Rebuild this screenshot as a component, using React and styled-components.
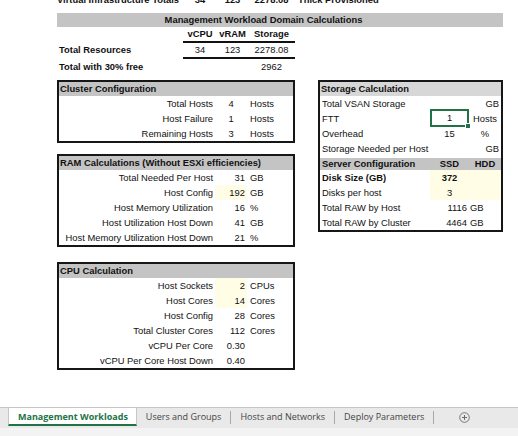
import styled, { createGlobalStyle } from "styled-components";

const GlobalStyle = createGlobalStyle`
  html, body {
    margin: 0;
    padding: 0;
    background: #fff;
  }
  body {
    font-family: "Liberation Sans", Arial, sans-serif;
    font-size: 9.4px;
    color: #111;
  }
`;

const clusterRows = [
  { label: "Total Hosts", value: "4", unit: "Hosts" },
  { label: "Host Failure", value: "1", unit: "Hosts" },
  { label: "Remaining Hosts", value: "3", unit: "Hosts" },
];

const ramRows = [
  { label: "Total Needed Per Host", value: "31", unit: "GB" },
  { label: "Host Config", value: "192", unit: "GB", fill: true },
  { label: "Host Memory Utilization", value: "16", unit: "%" },
  { label: "Host Utilization Host Down", value: "41", unit: "GB" },
  { label: "Host Memory Utilization Host Down", value: "21", unit: "%" },
];

const cpuRows = [
  { label: "Host Sockets", value: "2", unit: "CPUs", fill: true },
  { label: "Host Cores", value: "14", unit: "Cores", fill: true },
  { label: "Host Config", value: "28", unit: "Cores" },
  { label: "Total Cluster Cores", value: "112", unit: "Cores" },
  { label: "vCPU Per Core", value: "0.30", unit: "" },
  { label: "vCPU Per Core Host Down", value: "0.40", unit: "" },
];

const tabs = ["Users and Groups", "Hosts and Networks", "Deploy Parameters"];

function App() {
  return (
    <Page>
      <GlobalStyle />
      <Sheet>
        <Summary>
          <Cell $h={15} $align="left" $bold $pad={0}>Virtual Infrastructure Totals</Cell>
          <Cell $h={15} $bold>34</Cell>
          <Cell $h={15} $bold>123</Cell>
          <Cell $h={15} $bold>2278.08</Cell>
          <Cell $h={15} $align="left" $bold $pad={3}>Thick Provisioned</Cell>

          <Banner>Management Workload Domain Calculations</Banner>

          <Cell />
          <Cell $bold $line>vCPU</Cell>
          <Cell $bold $line>vRAM</Cell>
          <Cell $bold $line>Storage</Cell>
          <Cell />

          <Cell $align="left" $bold>Total Resources</Cell>
          <Cell $line>34</Cell>
          <Cell $line>123</Cell>
          <Cell $line>2278.08</Cell>
          <Cell />

          <Cell $h={15} $align="left" $bold>Total with 30% free</Cell>
          <Cell $h={15} />
          <Cell $h={15} />
          <Cell $h={15}>2962</Cell>
          <Cell $h={15} />
        </Summary>

        <Panels>
          <Column>
            <Box $w={238}>
              <BoxTitle>Cluster Configuration</BoxTitle>
              {clusterRows.map((r) => (
                <CalcRow key={r.label} $cols="156px 32px 1fr">
                  <Label $align="right">{r.label}</Label>
                  <Value $align="center">{r.value}</Value>
                  <Unit>{r.unit}</Unit>
                </CalcRow>
              ))}
            </Box>

            <Box $w={238} $mt={11}>
              <BoxTitle>RAM Calculations (Without ESXi efficiencies)</BoxTitle>
              {ramRows.map((r) => (
                <CalcRow key={r.label} $cols="156px 32px 1fr">
                  <Label $align="right">{r.label}</Label>
                  <Value $fill={r.fill}>{r.value}</Value>
                  <Unit>{r.unit}</Unit>
                </CalcRow>
              ))}
            </Box>

            <Box $w={238} $mt={15}>
              <BoxTitle>CPU Calculation</BoxTitle>
              {cpuRows.map((r) => (
                <CalcRow key={r.label} $cols="156px 32px 1fr">
                  <Label $align="right">{r.label}</Label>
                  <Value $fill={r.fill}>{r.value}</Value>
                  <Unit>{r.unit}</Unit>
                </CalcRow>
              ))}
            </Box>
          </Column>

          <Box $w={185}>
            <BoxTitle $light>Storage Calculation</BoxTitle>
            <CalcRow $cols="110px 39px 1fr">
              <Label>Total VSAN Storage</Label>
              <Value />
              <Unit $align="right">GB</Unit>
            </CalcRow>
            <CalcRow $cols="110px 39px 1fr">
              <Label>FTT</Label>
              <SelectedValue $align="center">1</SelectedValue>
              <Unit $pad={4}>Hosts</Unit>
            </CalcRow>
            <CalcRow $cols="110px 39px 1fr">
              <Label>Overhead</Label>
              <Value $align="center">15</Value>
              <Unit $align="center">%</Unit>
            </CalcRow>
            <CalcRow $cols="110px 39px 1fr">
              <Label>Storage Needed per Host</Label>
              <Value />
              <Unit $align="right">GB</Unit>
            </CalcRow>

            <HeaderRow $cols="110px 39px 1fr">
              <Label $bold>Server Configuration</Label>
              <Value $align="center" $bold>SSD</Value>
              <Unit $align="center" $bold>HDD</Unit>
            </HeaderRow>
            <CalcRow $cols="110px 39px 1fr">
              <Label $bold>Disk Size (GB)</Label>
              <Value $align="center" $bold $fill>372</Value>
              <Unit $fill />
            </CalcRow>
            <CalcRow $cols="110px 39px 1fr">
              <Label>Disks per host</Label>
              <Value $align="center" $fill>3</Value>
              <Unit $fill />
            </CalcRow>
            <CalcRow $cols="110px 39px 1fr">
              <Label>Total RAW by Host</Label>
              <Value>1116</Value>
              <Unit $pad={1}>GB</Unit>
            </CalcRow>
            <CalcRow $cols="110px 39px 1fr">
              <Label>Total RAW by Cluster</Label>
              <Value>4464</Value>
              <Unit $pad={1}>GB</Unit>
            </CalcRow>
          </Box>
        </Panels>
      </Sheet>

      <TabBar>
        <Tab $active>Management Workloads</Tab>
        {tabs.map((t) => (
          <Tab key={t}>{t}</Tab>
        ))}
        <AddSheet>
          <svg width="11" height="11" viewBox="0 0 11 11">
            <circle cx="5.5" cy="5.5" r="4.8" fill="none" stroke="#6b6b6b" strokeWidth="0.9" />
            <path d="M5.5 3v5M3 5.5h5" stroke="#6b6b6b" strokeWidth="1" />
          </svg>
        </AddSheet>
      </TabBar>
      <StatusStrip />
    </Page>
  );
}

export default App;

const Page = styled.div`
  width: 518px;
  height: 436px;
  display: flex;
  flex-direction: column;
  overflow: hidden;
`;

const Sheet = styled.div`
  flex: 1;
  overflow: hidden;
  padding-left: 57px;
  background: #fff;
`;

const Summary = styled.div`
  display: grid;
  grid-template-columns: 126px 34px 31px 47px auto;
  width: 446px;
  margin-top: -8px;
`;

const Cell = styled.div`
  height: ${(p) => p.$h || 14}px;
  line-height: ${(p) => p.$h || 14}px;
  text-align: ${(p) => p.$align || "center"};
  padding-left: ${(p) => (p.$pad !== undefined ? p.$pad : p.$align === "left" ? 2 : 0)}px;
  font-weight: ${(p) => (p.$bold ? 700 : 400)};
  border-bottom: ${(p) => (p.$line ? "2px solid #111" : "none")};
  white-space: nowrap;
`;

const Banner = styled.div`
  grid-column: 1 / -1;
  margin-top: 6px;
  height: 14px;
  line-height: 14px;
  background: #c4c4c4;
  font-weight: 700;
  text-align: center;
  padding-right: 33px;
`;

const Panels = styled.div`
  display: flex;
  align-items: flex-start;
  gap: 23px;
  margin-top: 6px;
`;

const Column = styled.div`
  display: flex;
  flex-direction: column;
`;

const Box = styled.div`
  box-sizing: border-box;
  width: ${(p) => p.$w}px;
  margin-top: ${(p) => p.$mt || 0}px;
  border: 2px solid #161616;
  background: #fff;
`;

const BoxTitle = styled.div`
  height: 14px;
  line-height: 14px;
  padding-left: 1px;
  font-weight: 700;
  background: ${(p) => (p.$light ? "#d7d7d7" : "#c4c4c4")};
  white-space: nowrap;
`;

const CalcRow = styled.div`
  display: grid;
  grid-template-columns: ${(p) => p.$cols};
  height: 15px;
  line-height: 15px;
  white-space: nowrap;
`;

const HeaderRow = styled(CalcRow)`
  margin-top: 2px;
  height: 12px;
  line-height: 12px;
  background: #c4c4c4;
`;

const Label = styled.div`
  text-align: ${(p) => p.$align || "left"};
  padding: ${(p) => (p.$align === "right" ? "0 2px 0 0" : "0 0 0 2px")};
  font-weight: ${(p) => (p.$bold ? 700 : 400)};
  overflow: hidden;
`;

const Value = styled.div`
  text-align: ${(p) => p.$align || "right"};
  padding-right: ${(p) => (p.$align === "center" ? 0 : 2)}px;
  font-weight: ${(p) => (p.$bold ? 700 : 400)};
  background: ${(p) => (p.$fill ? "#fffde6" : "transparent")};
`;

const SelectedValue = styled(Value)`
  position: relative;
  box-shadow: inset 0 0 0 2px #217346;
  margin: -2px 0 -1px;
  line-height: 18px;

  &::after {
    content: "";
    position: absolute;
    right: -2px;
    bottom: -2px;
    width: 4px;
    height: 4px;
    background: #217346;
    border: 1px solid #fff;
  }
`;

const Unit = styled.div`
  text-align: ${(p) => p.$align || "left"};
  padding-left: ${(p) => (p.$pad !== undefined ? p.$pad : p.$align ? 0 : 3)}px;
  padding-right: ${(p) => (p.$align === "right" ? 2 : 0)}px;
  font-weight: ${(p) => (p.$bold ? 700 : 400)};
  background: ${(p) => (p.$fill ? "#fffde6" : "transparent")};
`;

const TabBar = styled.div`
  box-sizing: border-box;
  height: 21px;
  flex: 0 0 21px;
  display: flex;
  align-items: flex-start;
  padding-left: 8px;
  background: #e9e9e9;
  border-top: 1px solid #c6c6c6;
  font-family: "Open Sans", "Liberation Sans", sans-serif;
  font-size: 9px;
  color: #444;
`;

const Tab = styled.div`
  position: relative;
  height: 16px;
  display: flex;
  align-items: center;
  padding: 0 ${(p) => (p.$active ? 8 : 10)}px 0 ${(p) => (p.$active ? 9 : 9)}px;
  white-space: nowrap;
  background: ${(p) => (p.$active ? "#fff" : "transparent")};
  color: ${(p) => (p.$active ? "#217346" : "#444")};
  font-weight: ${(p) => (p.$active ? 700 : 400)};
  border-bottom: 2px solid ${(p) => (p.$active ? "#217346" : "transparent")};
  border-left: ${(p) => (p.$active ? "1px solid #c6c6c6" : "none")};
  border-right: ${(p) => (p.$active ? "1px solid #c6c6c6" : "none")};

  &::after {
    content: "";
    display: ${(p) => (p.$active ? "none" : "block")};
    position: absolute;
    right: 0;
    top: 3px;
    bottom: 0;
    width: 1px;
    background: #a8a8a8;
  }
`;

const AddSheet = styled.div`
  height: 18px;
  display: flex;
  align-items: center;
  padding-left: 25px;
`;

const StatusStrip = styled.div`
  flex: 0 0 8px;
  background: #f3f3f3;
`;
